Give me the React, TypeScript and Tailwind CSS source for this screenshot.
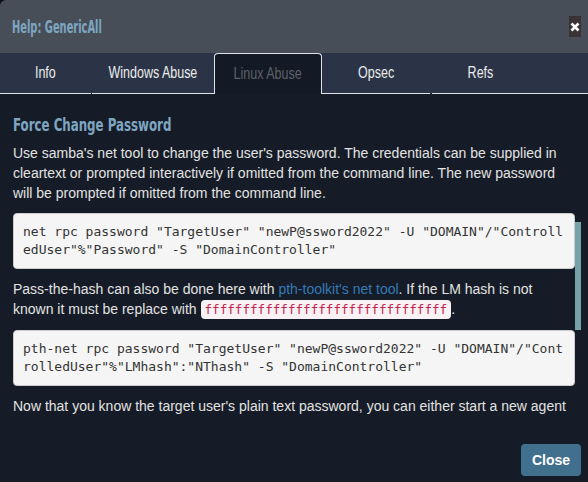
import React from "react";

const sans = { fontFamily: '"Liberation Sans", Arial, sans-serif' };
const cond = { fontFamily: '"DejaVu Sans Condensed", "DejaVu Sans", sans-serif' };
const mono = { fontFamily: '"DejaVu Sans Mono", monospace' };

function CloseX() {
  return (
    <div className="w-[12px] h-[21px] bg-[#3a3234] flex items-center justify-center">
      <svg width="10" height="10" viewBox="0 0 10 10">
        <path d="M1.5 1.5 L8.5 8.5 M8.5 1.5 L1.5 8.5" stroke="#ffffff" strokeWidth="2.6" strokeLinecap="butt" />
      </svg>
    </div>
  );
}

const tabs = [
  { label: "Info", w: "w-[91px] mr-[1px]" },
  { label: "Windows Abuse", w: "w-[122px]" },
  { label: "Linux Abuse", w: "w-[108px]", active: true },
  { label: "Opsec", w: "w-[108px] mr-[2px]" },
  { label: "Refs", w: "w-[97px]" },
];

export default function App() {
  return (
    <div className="w-[588px] h-[482px] bg-[#0c0f14] overflow-hidden" style={sans}>
      <div className="h-full flex flex-col bg-[#161c27] rounded-tl-[6px] overflow-hidden">
        <div className="h-[53px] shrink-0 bg-[#474e58] flex items-center justify-between pl-[12px] pr-[7px]">
          <span className="inline-block origin-left scale-x-[0.61] text-[#7ea6c1] text-[18px] font-bold whitespace-nowrap" style={cond}>
            Help: GenericAll
          </span>
          <CloseX />
        </div>
        <div className="h-[41px] shrink-0 bg-[#2a3446] flex">
          {tabs.map((t) =>
            t.active ? (
              <div
                key={t.label}
                className={`${t.w} h-full flex items-center justify-center bg-[#141a25] border border-b-0 border-[#dfe3e6] rounded-t-[4px] text-[#5c6168] text-[16px]`}
              >
                <span className="inline-block scale-x-[0.78] whitespace-nowrap">{t.label}</span>
              </div>
            ) : (
              <div
                key={t.label}
                className={`${t.w} h-full flex items-center justify-center border-b border-[#dfe3e6] text-[#ececec] text-[16px]`}
              >
                <span className="inline-block scale-x-[0.78] whitespace-nowrap">{t.label}</span>
              </div>
            )
          )}
          <div className="flex-1 h-full border-b border-[#dfe3e6]" />
        </div>
        <div className="relative h-[322px] shrink-0 overflow-hidden px-[13px] pt-[20px] text-[14px] leading-[20px] text-[#e2e2e2]">
          <h3 className="text-[#7ea6c1] text-[18px] leading-[22px] font-bold mb-[7px]" style={cond}>
            <span className="inline-block origin-left scale-x-[0.73] whitespace-nowrap">Force Change Password</span>
          </h3>
          <p className="mb-[10px]">
            Use samba's net tool to change the user's password. The credentials can be supplied in cleartext or prompted
            interactively if omitted from the command line. The new password will be prompted if omitted from the command
            line.
          </p>
          <pre
            className="mb-[10px] bg-[#f5f5f5] border border-[#cccccc] rounded-[4px] px-[9px] py-[9px] text-[13px] leading-[18px] text-[#333333] whitespace-pre-wrap break-all"
            style={mono}
          >
            net rpc password "TargetUser" "newP@ssword2022" -U "DOMAIN"/"ControlledUser"%"Password" -S "DomainController"
          </pre>
          <p className="mb-[10px]">
            Pass-the-hash can also be done here with <span className="text-[#337ab7]">pth-toolkit's net tool</span>. If
            the LM hash is not known it must be replace with{" "}
            <code className="bg-[#f9f2f4] text-[#c7254e] text-[12.6px] px-[4px] py-[2px] rounded-[4px]" style={mono}>
              ffffffffffffffffffffffffffffffff
            </code>
            .
          </p>
          <pre
            className="mb-[10px] bg-[#f5f5f5] border border-[#cccccc] rounded-[4px] px-[9px] py-[9px] text-[13px] leading-[18px] text-[#333333] whitespace-pre-wrap break-all"
            style={mono}
          >
            pth-net rpc password "TargetUser" "newP@ssword2022" -U "DOMAIN"/"ControlledUser"%"LMhash":"NThash" -S "DomainController"
          </pre>
          <p>
            Now that you know the target user's plain text password, you can either start a new agent as the new user, or
            use that user's credentials in conjunction with PowerView's ACL abuse functions.
          </p>
          <div className="absolute right-[7px] top-[128px] w-[6px] h-[108px] bg-[#76a2a8]" />
        </div>
        <div className="flex-1 flex items-end justify-end pr-[7px] pb-[6px]">
          <button className="w-[60px] h-[32px] rounded-[4px] bg-[#41708f] text-white text-[14px] font-semibold">
            Close
          </button>
        </div>
      </div>
    </div>
  );
}
